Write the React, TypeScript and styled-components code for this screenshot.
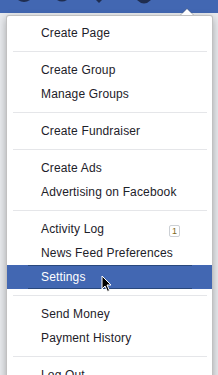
import React from "react";
import styled, { createGlobalStyle } from "styled-components";

const GlobalStyle = createGlobalStyle`
  body {
    margin: 0;
    background: #e9ebee;
    font-family: "Liberation Sans", Arial, sans-serif;
  }
`;

const Page = styled.div`
  width: 218px;
  height: 375px;
  overflow: hidden;
`;

const TopBar = styled.div`
  height: 13px;
  background: #4267b2;
  display: flex;
  align-items: flex-start;
`;

const Bump = styled.svg<{ $left: number }>`
  display: block;
  margin-left: ${(p) => p.$left}px;
  flex-shrink: 0;
`;

const MenuWrap = styled.div`
  position: relative;
  margin: 2px 5px 0 6px;
`;

const Menu = styled.ul`
  list-style: none;
  margin: 0;
  padding: 5px 0;
  background: #fff;
  border: 1px solid rgba(100, 100, 100, 0.4);
  border-radius: 3px;
  box-shadow: 0 3px 8px rgba(0, 0, 0, 0.3);
`;

const Notch = styled.div`
  position: absolute;
  top: -7px;
  right: 19px;
  width: 0;
  height: 0;
  border-left: 7px solid transparent;
  border-right: 7px solid transparent;
  border-bottom: 7px solid rgba(100, 100, 100, 0.4);

  &::after {
    content: "";
    position: absolute;
    top: 1px;
    left: -6px;
    border-left: 6px solid transparent;
    border-right: 6px solid transparent;
    border-bottom: 6px solid #fff;
  }
`;

const Item = styled.li<{ $active?: boolean }>`
  position: relative;
  background: ${(p) => (p.$active ? "#4267b2" : "transparent")};
`;

const ItemLink = styled.a<{ $active?: boolean }>`
  display: flex;
  align-items: center;
  height: 22px;
  margin: 0 20px 0 21px;
  padding: 0 12px 0 13px;
  border-top: 1px solid ${(p) => (p.$active ? "#29487d" : "transparent")};
  border-bottom: 1px solid ${(p) => (p.$active ? "#29487d" : "transparent")};
  color: ${(p) => (p.$active ? "#fff" : "#1d2129")};
  font-size: 12px;
  letter-spacing: 0.15px;
  text-decoration: none;
  white-space: nowrap;
`;

const Badge = styled.span`
  margin-left: auto;
  margin-top: 3px;
  box-sizing: border-box;
  width: 11px;
  height: 12px;
  border: 1px solid #ccd0d5;
  border-radius: 2px;
  font-size: 9px;
  line-height: 10px;
  letter-spacing: 0;
  text-align: center;
  color: #7f6a1d;
`;

const Separator = styled.li`
  height: 1px;
  margin: 6px 5px 6px 6px;
  background: #e5e6e9;
`;

const Cursor = styled.svg`
  position: absolute;
  left: 94px;
  top: 10px;
  pointer-events: none;
`;

type Entry = { label: string; badge?: string; active?: boolean } | "sep";

const entries: Entry[] = [
  { label: "Create Page" },
  "sep",
  { label: "Create Group" },
  { label: "Manage Groups" },
  "sep",
  { label: "Create Fundraiser" },
  "sep",
  { label: "Create Ads" },
  { label: "Advertising on Facebook" },
  "sep",
  { label: "Activity Log", badge: "1" },
  { label: "News Feed Preferences" },
  { label: "Settings", active: true },
  "sep",
  { label: "Send Money" },
  { label: "Payment History" },
  "sep",
  { label: "Log Out" },
];

export default function App() {
  return (
    <Page>
      <GlobalStyle />
      <TopBar>
        <Bump $left={18} width="12" height="3" viewBox="0 0 12 3">
          <path d="M0 0 Q6 4 12 0 Z" fill="#1f2d4f" />
        </Bump>
        <Bump $left={27} width="10" height="3" viewBox="0 0 10 3">
          <path d="M0 0 Q5 3 10 0 Z" fill="#1f2d4f" />
        </Bump>
        <Bump $left={29} width="6" height="3" viewBox="0 0 6 3">
          <path d="M0 0 L3 3 L6 0 Z" fill="#1f2d4f" />
        </Bump>
        <Bump $left={35} width="14" height="4" viewBox="0 0 14 4">
          <path d="M0 0 Q7 7 14 0 Z" fill="#1f2d4f" />
        </Bump>
      </TopBar>
      <MenuWrap>
        <Notch />
        <Menu>
          {entries.map((e, i) =>
            e === "sep" ? (
              <Separator key={i} />
            ) : (
              <Item key={i} $active={e.active}>
                <ItemLink href="#" $active={e.active}>
                  {e.label}
                  {e.badge && <Badge>{e.badge}</Badge>}
                </ItemLink>
                {e.active && (
                  <Cursor width="12" height="18" viewBox="0 0 12 18">
                    <path
                      d="M1 1 L1 14 L4 11 L6.5 16.5 L8.5 15.5 L6 10 L10 10 Z"
                      fill="#000"
                      stroke="#fff"
                      strokeWidth="1"
                      strokeLinejoin="round"
                    />
                  </Cursor>
                )}
              </Item>
            )
          )}
        </Menu>
      </MenuWrap>
    </Page>
  );
}
